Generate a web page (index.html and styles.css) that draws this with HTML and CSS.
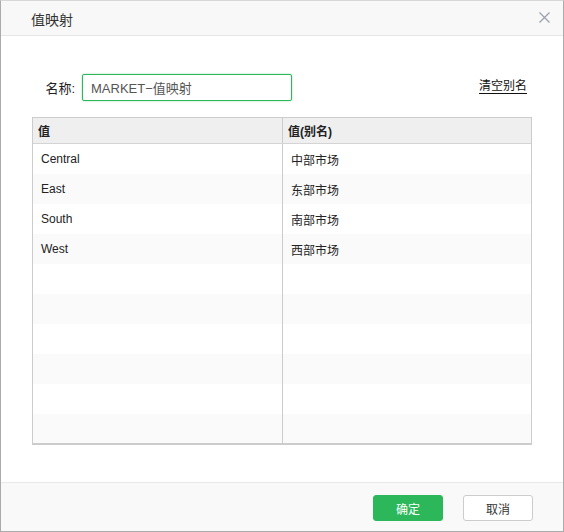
FILE: index.html
```html
<!DOCTYPE html>
<html lang="zh">
<head>
    <meta charset="UTF-8">
    <title>值映射</title>
    <link rel="stylesheet" href="styles.css">
</head>
<body>
    <div class="dialog">
        <!-- Hlavička -->
        <div class="dialog-head">
            <span class="dialog-title">值映射</span>
            <span class="close-btn">
                <svg width="11" height="11" viewBox="0 0 11 11"><path d="M0.5 0.5 L10.5 10.5 M10.5 0.5 L0.5 10.5" stroke="#9aa3ad" stroke-width="1.3" fill="none"/></svg>
            </span>
        </div>

        <div class="dialog-body">
            <div class="name-row">
                <label class="name-label">名称:</label>
                <input class="name-input" type="text" value="MARKET−值映射">
                <a href="#" class="clear-link">清空别名</a>
            </div>

            <div class="map-grid">
                <div class="grid-row grid-head">
                    <div class="cell">值</div>
                    <div class="cell">值(别名)</div>
                </div>
                <div class="grid-row"><div class="cell">Central</div><div class="cell">中部市场</div></div>
                <div class="grid-row"><div class="cell">East</div><div class="cell">东部市场</div></div>
                <div class="grid-row"><div class="cell">South</div><div class="cell">南部市场</div></div>
                <div class="grid-row"><div class="cell">West</div><div class="cell">西部市场</div></div>
                <div class="grid-row"><div class="cell"></div><div class="cell"></div></div>
                <div class="grid-row"><div class="cell"></div><div class="cell"></div></div>
                <div class="grid-row"><div class="cell"></div><div class="cell"></div></div>
                <div class="grid-row"><div class="cell"></div><div class="cell"></div></div>
                <div class="grid-row"><div class="cell"></div><div class="cell"></div></div>
                <div class="grid-row last"><div class="cell"></div><div class="cell"></div></div>
            </div>
        </div>

        <div class="dialog-foot">
            <button class="btn btn-ok">确定</button>
            <button class="btn btn-cancel">取消</button>
        </div>
    </div>
</body>
</html>
```

FILE: styles.css
```css
body, html {
    margin: 0;
    padding: 0;
    background-color: #fff;
    font-family: 'Liberation Sans', 'Noto Sans CJK SC', sans-serif;
    color: #222;
}
.dialog {
    width: 564px;
    height: 532px;
    box-sizing: border-box;
    border: 1px solid #ababab;
    border-top-color: #d8d8d8;
    display: flex;
    flex-direction: column;
    background-color: #fff;
}

.dialog-head {
    height: 34px;
    flex-shrink: 0;
    background-color: #f8f8f8;
    border-bottom: 1px solid #e6e6e6;
    display: flex;
    align-items: center;
    justify-content: space-between;
    padding: 0 13px 0 30px;
}
.dialog-title {
    font-size: 14px;
    color: #333;
    padding-top: 2px;
}
.close-btn {
    display: flex;
    margin-top: -2px;
}

.dialog-body {
    flex: 1;
    padding: 38px 0 0 31px;
}
.name-row {
    display: flex;
    align-items: center;
    height: 27px;
    width: 495px;
}
.name-label {
    font-size: 13px;
    color: #222;
    width: 43px;
    text-align: right;
    margin-right: 7px;
}
.name-input {
    width: 210px;
    height: 27px;
    box-sizing: border-box;
    border: 1px solid #2bb75a;
    border-radius: 2px;
    box-shadow: 0 0 2px rgba(43, 183, 90, 0.5);
    padding: 0 8px;
    font-family: 'Liberation Sans', 'Noto Sans CJK SC', sans-serif;
    font-size: 13px;
    color: #555;
    outline: none;
}
.clear-link {
    margin-left: auto;
    font-size: 12px;
    color: #111;
    text-decoration: none;
    border-bottom: 1px solid #111;
    line-height: 14px;
    margin-top: -2px;
}

.map-grid {
    margin-top: 16px;
    width: 500px;
    box-sizing: border-box;
    border: 1px solid #ccc;
    border-bottom-width: 2px;
}
.grid-row {
    display: flex;
    height: 30px;
    font-size: 12px;
}
.grid-row:nth-child(odd) { background-color: #fafafa; }
.grid-row.last { height: 29px; }
.grid-row .cell {
    display: flex;
    align-items: center;
    padding-left: 8px;
    box-sizing: border-box;
}
.grid-row .cell:first-child {
    width: 250px;
    border-right: 1px solid #ccc;
}
.grid-row .cell:last-child {
    flex: 1;
}
.grid-head {
    height: 25px;
    background-color: #efefef !important;
    border-bottom: 1px solid #d4d4d4;
    font-weight: bold;
}
.grid-head .cell {
    padding-left: 5px;
}

.dialog-foot {
    height: 49px;
    flex-shrink: 0;
    background-color: #f9f9f9;
    border-top: 1px solid #e8e8e8;
    display: flex;
    justify-content: flex-end;
    align-items: flex-start;
    padding: 12px 30px 0 0;
    box-sizing: border-box;
    gap: 20px;
}
.btn {
    width: 70px;
    height: 26px;
    border-radius: 3px;
    font-family: 'Liberation Sans', 'Noto Sans CJK SC', sans-serif;
    font-size: 12px;
    cursor: pointer;
}
.btn-ok {
    background-color: #2bb75a;
    border: 1px solid #2bb75a;
    color: #fff;
}
.btn-cancel {
    background-color: #fff;
    border: 1px solid #ccc;
    color: #333;
}
```
